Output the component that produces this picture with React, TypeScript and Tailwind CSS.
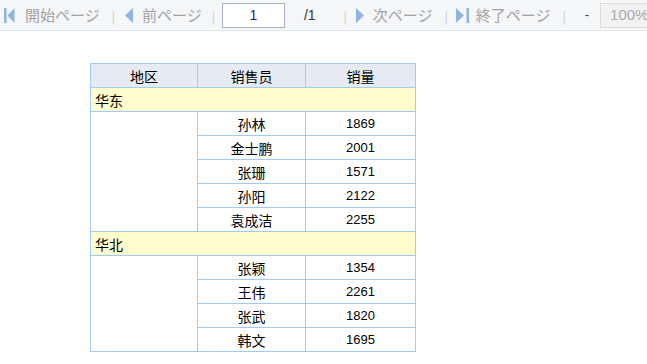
const groups = [
  {
    region: "华东",
    rows: [
      ["孙林", "1869"],
      ["金士鹏", "2001"],
      ["张珊", "1571"],
      ["孙阳", "2122"],
      ["袁成洁", "2255"],
    ],
  },
  {
    region: "华北",
    rows: [
      ["张颖", "1354"],
      ["王伟", "2261"],
      ["张武", "1820"],
      ["韩文", "1695"],
    ],
  },
];

const FirstIcon = () => (
  <svg width="11" height="15" viewBox="0 0 11 15" className="shrink-0">
    <rect x="0" y="0" width="2.5" height="15" fill="#8db4e2" />
    <polygon points="10.5,0 10.5,15 3.5,7.5" fill="#8db4e2" />
  </svg>
);

const PrevIcon = () => (
  <svg width="8" height="15" viewBox="0 0 8 15" className="shrink-0">
    <polygon points="8,0 8,15 0,7.5" fill="#8db4e2" />
  </svg>
);

const NextIcon = () => (
  <svg width="8" height="15" viewBox="0 0 8 15" className="shrink-0">
    <polygon points="0,0 0,15 8,7.5" fill="#8db4e2" />
  </svg>
);

const LastIcon = () => (
  <svg width="14" height="15" viewBox="0 0 14 15" className="shrink-0">
    <polygon points="0,0 0,15 8,7.5" fill="#8db4e2" />
    <rect x="10.5" y="0" width="2.5" height="15" fill="#8db4e2" />
  </svg>
);

const Sep = () => <span className="shrink-0 text-[12px] text-[#c8c8c8]">|</span>;

export default function App() {
  return (
    <div className="min-h-screen bg-white font-['Noto_Sans_CJK_JP','Noto_Sans_CJK_SC',sans-serif]">
      <div className="flex h-[31px] items-center overflow-hidden whitespace-nowrap border-b border-[#e4e6ea] bg-[#f5f6f8] text-[15px] text-[#a3a3a3]">
        <div className="ml-[4px] flex shrink-0 items-center gap-[10px]">
          <FirstIcon />
          <span>開始ページ</span>
        </div>
        <div className="ml-[12px] shrink-0"><Sep /></div>
        <div className="ml-[10px] flex shrink-0 items-center gap-[9px]">
          <PrevIcon />
          <span>前ページ</span>
        </div>
        <div className="ml-[10px] shrink-0"><Sep /></div>
        <div className="ml-[7px] flex h-[25px] w-[63px] shrink-0 items-center justify-center border border-[#abb0c6] bg-white font-['Liberation_Sans',sans-serif] text-[14px] text-[#1a237e]">
          1
        </div>
        <span className="ml-[19px] shrink-0 font-['Liberation_Sans',sans-serif] text-[14px] text-[#333]">/1</span>
        <div className="ml-[28px] shrink-0"><Sep /></div>
        <div className="ml-[9px] flex shrink-0 items-center gap-[9px]">
          <NextIcon />
          <span>次ページ</span>
        </div>
        <div className="ml-[12px] shrink-0"><Sep /></div>
        <div className="ml-[8px] flex shrink-0 items-center gap-[6px]">
          <LastIcon />
          <span>終了ページ</span>
        </div>
        <div className="ml-[12px] shrink-0"><Sep /></div>
        <span className="ml-[19px] shrink-0 font-['Liberation_Sans',sans-serif] text-[13px] text-[#333]">-</span>
        <div className="ml-[11px] flex h-[25px] w-[60px] shrink-0 items-center border border-[#dcdcdc] bg-[#f2f2f2] pl-[9px] font-['Liberation_Sans',sans-serif] text-[15px] text-[#a9a9a9]">
          100%
        </div>
      </div>

      <div className="ml-[90px] mt-[32px] w-[325px]">
        <table className="w-full table-fixed border-collapse font-['Noto_Sans_CJK_SC',sans-serif] text-[14px] text-black">
          <colgroup>
            <col className="w-[107px]" />
            <col className="w-[108px]" />
            <col className="w-[110px]" />
          </colgroup>
          <thead>
            <tr className="h-[24px] bg-[#e6eaf2]">
              <th className="border border-[#9ecbf7] p-0 text-center font-normal leading-none">地区</th>
              <th className="border border-[#9ecbf7] p-0 text-center font-normal leading-none">销售员</th>
              <th className="border border-[#9ecbf7] p-0 text-center font-normal leading-none">销量</th>
            </tr>
          </thead>
          <tbody>
            {groups.map((g) => (
              <>
                <tr key={g.region} className="h-[24px] bg-[#fefdcc]">
                  <td colSpan={3} className="border border-[#9ecbf7] p-0 pl-[4px] leading-none">
                    {g.region}
                  </td>
                </tr>
                {g.rows.map(([name, qty], i) => (
                  <tr key={name} className="h-[24px]">
                    {i === 0 && (
                      <td rowSpan={g.rows.length} className="border border-[#9ecbf7] p-0" />
                    )}
                    <td className="border border-[#9ecbf7] p-0 text-center leading-none">{name}</td>
                    <td className="border border-[#9ecbf7] p-0 text-center font-['Liberation_Sans',sans-serif] text-[13px] leading-none">
                      {qty}
                    </td>
                  </tr>
                ))}
              </>
            ))}
          </tbody>
        </table>
      </div>
    </div>
  );
}
